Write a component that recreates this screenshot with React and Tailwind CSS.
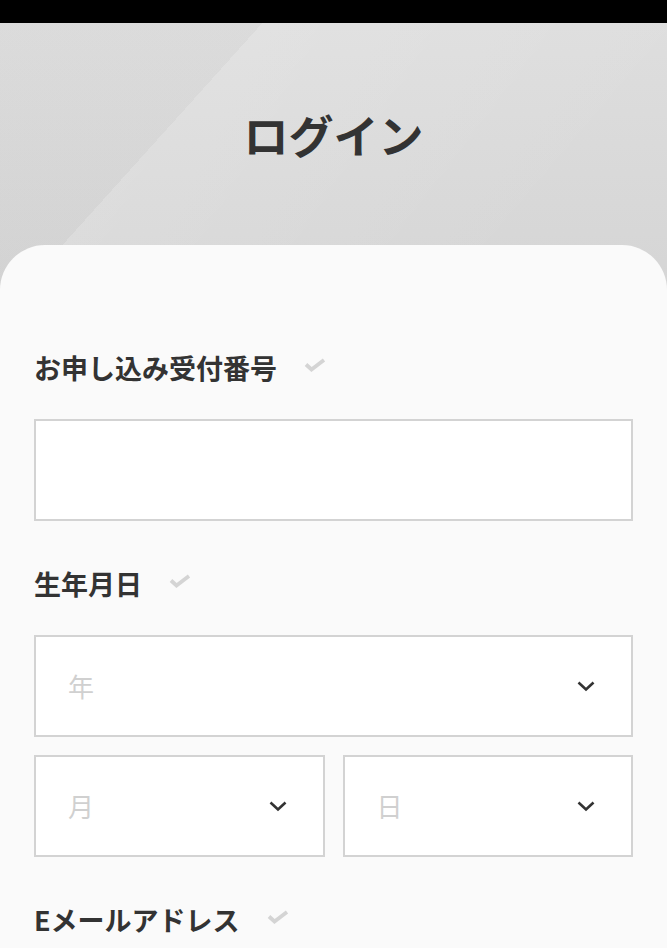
const FONT = { fontFamily: '"Noto Sans CJK JP", "Noto Sans", sans-serif' };

function Check() {
  return (
    <svg width="22" height="14" viewBox="0 0 22 14" className="ml-[27px] mb-1" fill="none">
      <polyline points="2,6.5 7.5,11.5 20,2" stroke="#d4d4d4" strokeWidth="3.8" />
    </svg>
  );
}

function Chevron() {
  return (
    <svg width="18" height="11" viewBox="0 0 18 11" fill="none">
      <polyline points="1.5,1.5 9,8.5 16.5,1.5" stroke="#333" strokeWidth="2.6" />
    </svg>
  );
}

function FieldLabel({ children }) {
  return (
    <div className="flex items-center h-[36px]">
      <span className="text-[27px] font-bold text-[#333] leading-none">{children}</span>
      <Check />
    </div>
  );
}

function SelectBox({ placeholder, className = '' }) {
  return (
    <div className={`h-[102px] border-2 border-[#d3d3d3] bg-white flex items-center justify-between pl-[32px] pr-[36px] ${className}`}>
      <span className="text-[26px] text-[#d0d0d0] leading-none">{placeholder}</span>
      <Chevron />
    </div>
  );
}

export default function App() {
  return (
    <div className="min-h-[948px] bg-[#fafafa] overflow-hidden" style={FONT}>
      {/* status bar */}
      <div className="h-[23px] bg-black" />

      <div className="bg-[#d4d4d4] bg-no-repeat bg-[length:100%_300px] bg-[linear-gradient(132deg,rgba(0,0,0,0.01)_0%,rgba(0,0,0,0.01)_28%,rgba(255,255,255,0.12)_28%,rgba(255,255,255,0)_78%),linear-gradient(180deg,#dedede_0%,#d4d4d4_100%)]">
        {/* title */}
        <div className="h-[222px] flex items-center justify-center">
          <h1 className="text-[45px] font-bold text-[#333] leading-none">ログイン</h1>
        </div>

        {/* form card */}
        <div className="rounded-t-[45px] bg-[#fafafa] px-[34px] pt-[104px] pb-10 min-h-[703px]">
          <FieldLabel>お申し込み受付番号</FieldLabel>
          <div className="mt-[34px] h-[102px] border-2 border-[#d3d3d3] bg-white" />

          <div className="mt-[44px]">
            <FieldLabel>生年月日</FieldLabel>
          </div>
          <SelectBox placeholder="年" className="mt-[34px]" />
          <div className="mt-[18px] grid grid-cols-2 gap-[18px]">
            <SelectBox placeholder="月" />
            <SelectBox placeholder="日" />
          </div>

          <div className="mt-[44px]">
            <FieldLabel>Eメールアドレス</FieldLabel>
          </div>
        </div>
      </div>
    </div>
  );
}
